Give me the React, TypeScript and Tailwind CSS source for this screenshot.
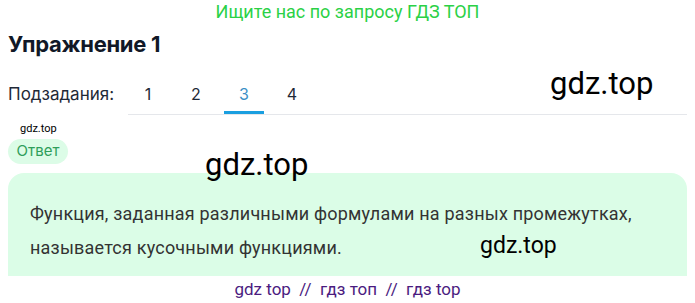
export default function App() {
  const tabs = ["1", "2", "3", "4"];
  const active = "3";

  return (
    <div className="relative w-[695px] h-[303px] overflow-hidden bg-white px-2 font-['Roboto',sans-serif]">
      <div className="h-[24px] text-center text-[18px] leading-[24px] text-[#2bd146]">
        Ищите нас по запросу ГДЗ ТОП
      </div>

      <h1 className="mt-[5px] text-[22px] leading-[30px] font-bold text-[#111827] font-['Inter',sans-serif] tracking-[-0.3px]">
        Упражнение 1
      </h1>

      <div className="mt-[15px] flex items-center">
        <span className="w-[120px] text-[17px] text-[#1f2937] font-['Inter',sans-serif]">Подзадания:</span>
        <div className="flex flex-1 gap-[8px] border-b border-[#e5e7eb]">
          {tabs.map((t) => (
            <div
              key={t}
              className={
                t === active
                  ? "-mb-px flex h-[40px] w-[40px] items-center justify-center border-b-[3px] border-[#1a9fe0] pt-[3px] text-[16px] text-[#3c8fc6] font-['Inter',sans-serif]"
                  : "flex h-[40px] w-[40px] items-center justify-center text-[16px] text-[#1f2937] font-['Inter',sans-serif]"
              }
            >
              {t}
            </div>
          ))}
        </div>
      </div>

      <div className="mt-[7px] pl-[12px] text-[11px] leading-[14px] text-black">gdz.top</div>

      <div className="mt-[3px] flex h-[25px] w-[60px] items-center justify-center rounded-full bg-[#dcfce7] text-[15px] text-[#2f9e5a] font-['Inter',sans-serif]">
        Ответ
      </div>

      <div className="relative mt-[9px] h-[103px] rounded-t-2xl bg-[#dbfde7] pl-[22px] pt-[24px] text-[18px] leading-[34px] tracking-[0.2px] text-[#333333]">
        <p>Функция, заданная различными формулами на разных промежутках,</p>
        <p>называется кусочными функциями.</p>
        <span className="absolute left-[472px] top-[61px] text-[23px] leading-[23px] tracking-normal text-black">gdz.top</span>
      </div>

      <div className="h-[28px] text-center text-[17px] leading-[26px] text-[#4b1b80]">
        gdz top&nbsp;&nbsp;//&nbsp;&nbsp;гдз топ&nbsp;&nbsp;//&nbsp;&nbsp;гдз top
      </div>

      <span className="absolute left-[550px] top-[68px] text-[31px] leading-[31px] text-black">gdz.top</span>
      <span className="absolute left-[205px] top-[149px] text-[31px] leading-[31px] text-black">gdz.top</span>
    </div>
  );
}
